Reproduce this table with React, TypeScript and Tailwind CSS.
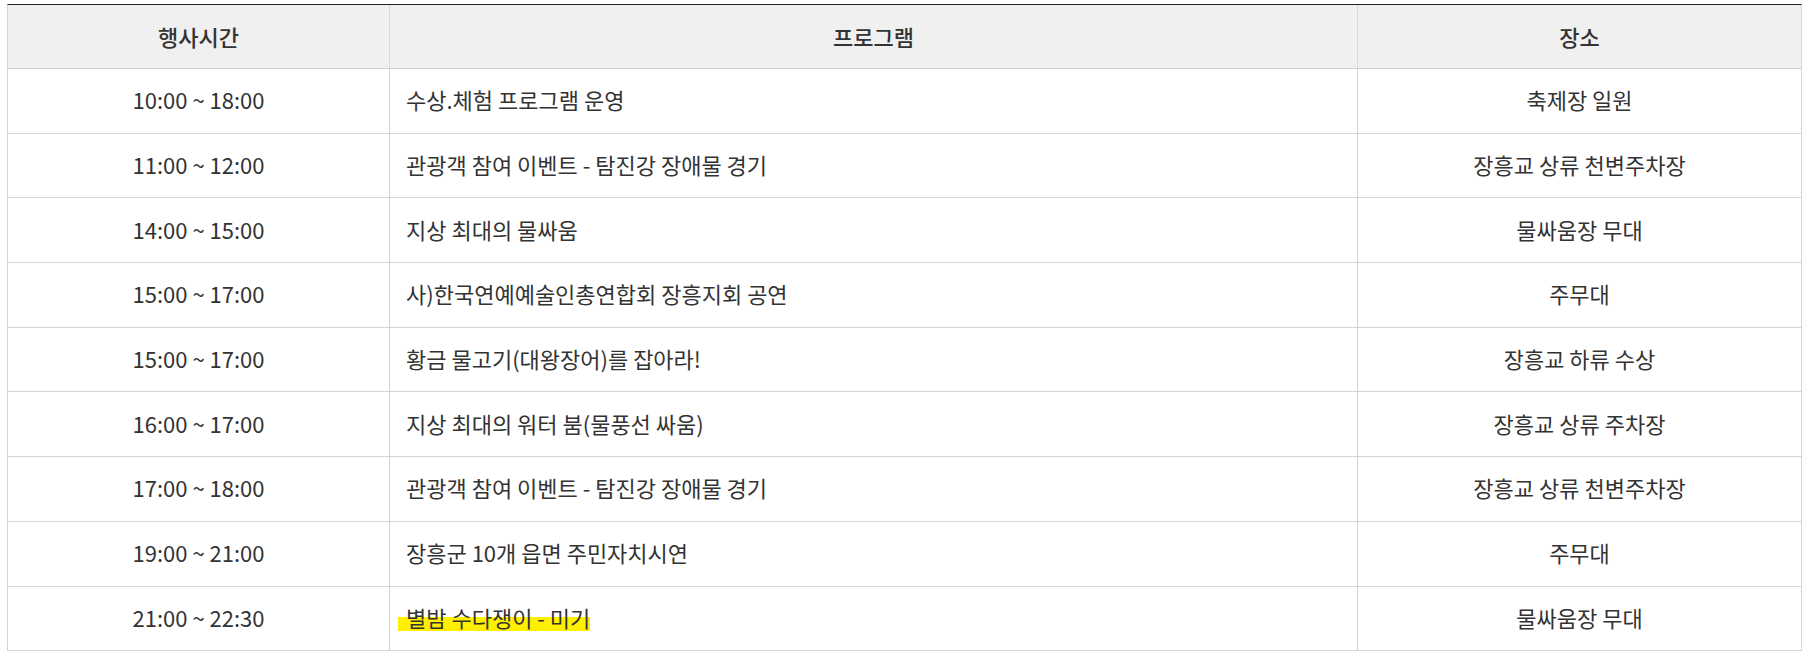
import React from "react";

const rows: [string, string, string][] = [
  ["10:00 ~ 18:00", "수상.체험 프로그램 운영", "축제장 일원"],
  ["11:00 ~ 12:00", "관광객 참여 이벤트 - 탐진강 장애물 경기", "장흥교 상류 천변주차장"],
  ["14:00 ~ 15:00", "지상 최대의 물싸움", "물싸움장 무대"],
  ["15:00 ~ 17:00", "사)한국연예예술인총연합회 장흥지회 공연", "주무대"],
  ["15:00 ~ 17:00", "황금 물고기(대왕장어)를 잡아라!", "장흥교 하류 수상"],
  ["16:00 ~ 17:00", "지상 최대의 워터 붐(물풍선 싸움)", "장흥교 상류 주차장"],
  ["17:00 ~ 18:00", "관광객 참여 이벤트 - 탐진강 장애물 경기", "장흥교 상류 천변주차장"],
  ["19:00 ~ 21:00", "장흥군 10개 읍면 주민자치시연", "주무대"],
  ["21:00 ~ 22:30", "별밤 수다쟁이 - 미기", "물싸움장 무대"],
];

export default function App() {
  return (
    <div
      className="bg-white w-[1812px] h-[658px] pt-[4px] pl-[7px] text-[#333]"
      style={{ fontFamily: '"Noto Sans CJK KR", "Noto Sans", sans-serif' }}
    >
      <div className="w-[1795px] border-t border-t-[#222] border-l border-r border-[#d4d4d4]">
        <div className="grid grid-cols-[381px_968px_1fr] h-[64px] bg-[#f0f0f0] border-b border-b-[#cfcfcf] text-[22px] font-medium">
          <div className="flex items-center justify-center">행사시간</div>
          <div className="flex items-center justify-center border-l border-[#dadada]">프로그램</div>
          <div className="flex items-center justify-center border-l border-[#dadada]">장소</div>
        </div>
        {rows.map((r, i) => (
          <div
            key={i}
            className="grid grid-cols-[381px_968px_1fr] h-[64.7px] border-b border-b-[#d4d4d4] text-[22px] leading-[32px]"
          >
            <div className="flex items-center justify-center pb-[3px]">{r[0]}</div>
            <div className="flex items-center pl-[16px] pb-[3px] border-l border-[#d4d4d4]">
              {i === rows.length - 1 ? (
                <span className="-ml-[8px] pl-[8px] bg-[linear-gradient(to_bottom,transparent_50%,#fff000_50%,#fff000_94%,transparent_94%)]">
                  {r[1]}
                </span>
              ) : (
                r[1]
              )}
            </div>
            <div className="flex items-center justify-center pb-[3px] border-l border-[#d4d4d4]">{r[2]}</div>
          </div>
        ))}
      </div>
    </div>
  );
}
